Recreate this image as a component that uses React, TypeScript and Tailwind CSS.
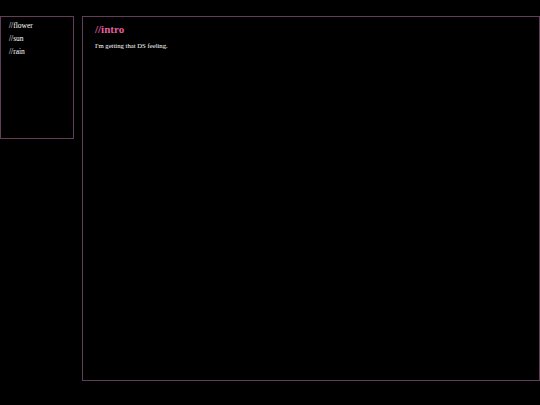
export default function App() {
  return (
    <div className="min-h-[405px] w-[540px] bg-black pt-4 font-['Liberation_Serif',serif] text-white">
      <div className="flex items-start gap-2">
        <nav className="h-[123px] w-[74px] border border-[#633d5a] px-2 pt-[2px]">
          <ul className="flex flex-col text-[7.5px] leading-[13px]">
            <li>//flower</li>
            <li>//sun</li>
            <li>//rain</li>
          </ul>
        </nav>
        <main className="h-[365px] flex-1 border border-[#633d5a] px-3 pt-[4px]">
          <h1 className="text-[11px] font-bold leading-[16px] text-[#e35f9f]">//intro</h1>
          <p className="mt-[3px] text-[6.7px] leading-[12px]">I'm getting that DS feeling.</p>
        </main>
      </div>
    </div>
  );
}
